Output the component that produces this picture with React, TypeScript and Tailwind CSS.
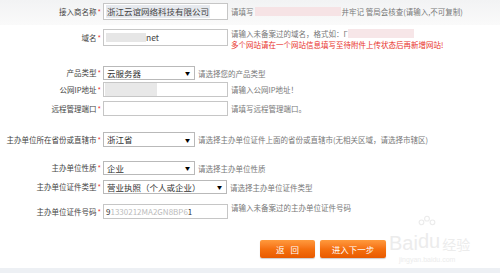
import React from "react";

const font = { fontFamily: '"Noto Sans CJK SC", "Noto Sans", sans-serif' };

function Label({ text }: { text: string }) {
    return (
        <div className="w-[103px] shrink-0 text-right pr-[2px] text-[7.5px] leading-none text-[#444]">
            {text}
            <span className="text-[#e33] ml-[1px]">*</span>
        </div>
    );
}

function Hint({ children, red }: { children: React.ReactNode; red?: boolean }) {
    return (
        <div className={`ml-[3px] text-[7.5px] leading-[11px] whitespace-nowrap ${red ? "text-[#e8322b]" : "text-[#777]"}`}>
            {children}
        </div>
    );
}

function Select({ value, w, h }: { value: string; w: string; h: string }) {
    return (
        <div className={`${w} ${h} shrink-0 border border-[#b9b9b9] bg-white flex items-center justify-between pl-[3px] pr-[4px] text-[8.5px] text-[#333]`}>
            <span>{value}</span>
            <span className="text-[5px] text-black">▼</span>
        </div>
    );
}

export default function App() {
    return (
        <div style={font} className="w-[500px] h-[273px] bg-white overflow-hidden flex flex-col relative">
            <div className="absolute top-0 left-0 w-full h-[25px] bg-gradient-to-b from-[#f2f3f4] to-[#fafafa]" />

            {/* 接入商名称 */}
            <div className="relative flex items-center h-[17px] mt-[3px]">
                <Label text="接入商名称" />
                <div className="w-[125px] h-[17px] shrink-0 border border-[#c6c6c6] bg-white flex items-center pl-[2px] text-[8.5px] text-[#444]">
                    <span className="bg-[#e6e9ee] px-[1px]">浙江云谊网络科技有限公司</span>
                </div>
                <Hint>
                    <span className="flex items-center">
                        请填写
                        <span className="inline-block w-[86px] h-[9px] mx-[1px] bg-[#f6e3e5]" />
                        井牢记 管局会核查(请输入,不可复制)
                    </span>
                </Hint>
            </div>

            {/* 域名 */}
            <div className="flex items-start h-[17px] mt-[9px]">
                <div className="h-[17px] flex items-center">
                    <Label text="域名" />
                </div>
                <div className="w-[125px] h-[17px] shrink-0 border border-[#c6c6c6] bg-white flex items-center pl-[2px] text-[8.5px] text-[#444]">
                    <span className="inline-block w-[40px] h-[9px] bg-[#e6e6e6]" />
                    <span>net</span>
                </div>
                <div className="ml-[3px] -mt-[1px]">
                    <div className="text-[7.5px] leading-[11px] text-[#777] whitespace-nowrap flex items-center">
                        请输入未备案过的域名，格式如：Г
                        <span className="inline-block w-[66px] h-[9px] bg-[#f7e6e8]" />
                    </div>
                    <div className="text-[7.5px] leading-[11px] text-[#e8322b] whitespace-nowrap">
                        多个网站请在一个网站信息填写至待附件上传状态后再新增网站!
                    </div>
                </div>
            </div>

            {/* 产品类型 */}
            <div className="flex items-center h-[14px] mt-[20px]">
                <Label text="产品类型" />
                <Select value="云服务器" w="w-[92px]" h="h-[14px]" />
                <Hint>请选择您的产品类型</Hint>
            </div>

            {/* 公网IP地址 */}
            <div className="flex items-center h-[15px] mt-[2px]">
                <Label text="公网IP地址" />
                <div className="w-[125px] h-[15px] shrink-0 border border-[#c6c6c6] bg-white flex items-center pl-[1px]">
                    <span className="inline-block w-[52px] h-[13px] bg-[#e8e8e8]" />
                </div>
                <Hint>请输入公网IP地址！</Hint>
            </div>

            {/* 远程管理端口 */}
            <div className="flex items-center h-[15px] mt-[4px]">
                <Label text="远程管理端口" />
                <div className="w-[125px] h-[15px] shrink-0 border border-[#c6c6c6] bg-white" />
                <Hint>请填写远程管理端口。</Hint>
            </div>

            {/* 省份 */}
            <div className="flex items-center h-[15px] mt-[16px]">
                <Label text="主办单位所在省份或直辖市" />
                <Select value="浙江省" w="w-[92px]" h="h-[15px]" />
                <Hint>请选择主办单位证件上面的省份或直辖市(无相关区域，请选择市辖区)</Hint>
            </div>

            {/* 性质 */}
            <div className="flex items-center h-[14px] mt-[14px]">
                <Label text="主办单位性质" />
                <Select value="企业" w="w-[92px]" h="h-[14px]" />
                <Hint>请选择主办单位性质</Hint>
            </div>

            {/* 证件类型 */}
            <div className="flex items-center h-[14px] mt-[5px]">
                <Label text="主办单位证件类型" />
                <Select value="营业执照（个人或企业）" w="w-[124px]" h="h-[14px]" />
                <Hint>请选择主办单位证件类型</Hint>
            </div>

            {/* 证件号码 */}
            <div className="flex items-start h-[15px] mt-[10px]">
                <div className="h-[15px] flex items-center">
                    <Label text="主办单位证件号码" />
                </div>
                <div className="w-[125px] h-[15px] shrink-0 border border-[#c6c6c6] bg-white flex items-center pl-[2px] text-[8px] text-[#bbb]">
                    <span className="text-[#333]">9</span>
                    <span>1330212MA2GN8BP6</span>
                    <span className="text-[#333]">1</span>
                </div>
                <div className="ml-[3px] -mt-[2px] text-[7.5px] leading-[11px] text-[#777] whitespace-nowrap">
                    请输入未备案过的主办单位证件号码
                </div>
            </div>

            {/* buttons */}
            <div className="relative flex items-center h-[18px] mt-[21px] pl-[260px] gap-[5px]">
                <button className="w-[55px] h-[18px] rounded-[2px] bg-gradient-to-b from-[#ff9a3c] via-[#f5700f] to-[#e85a00] text-white text-[8.5px] tracking-[6px] pl-[6px] shadow-[0_1px_1px_rgba(0,0,0,0.2)]">
                    返回
                </button>
                <button className="w-[66px] h-[18px] rounded-[2px] bg-gradient-to-b from-[#ff9a3c] via-[#f5700f] to-[#e85a00] text-white text-[8.5px] shadow-[0_1px_1px_rgba(0,0,0,0.2)]">
                    进入下一步
                </button>
            </div>

            {/* watermark */}
            <div className="absolute left-[389px] top-[229px] flex flex-col items-start pointer-events-none">
                <div className="flex items-end text-[#ececec]">
                    <span className="text-[20px] leading-none" style={{ fontFamily: '"Liberation Sans", sans-serif' }}>Bai</span>
                    <div className="relative">
                        <svg width="22" height="22" viewBox="0 0 24 24" className="absolute -top-[14px] left-[-2px]">
                            <circle cx="6" cy="8" r="2.6" fill="none" stroke="#ebebeb" strokeWidth="1.2" />
                            <circle cx="12" cy="4" r="2.6" fill="none" stroke="#ebebeb" strokeWidth="1.2" />
                            <circle cx="18" cy="8" r="2.6" fill="none" stroke="#ebebeb" strokeWidth="1.2" />
                        </svg>
                        <span className="text-[20px] leading-none" style={{ fontFamily: '"Liberation Sans", sans-serif' }}>du</span>
                    </div>
                    <span className="text-[14px] leading-none ml-[2px] mb-[2px]">经验</span>
                </div>
                <span className="text-[7px] text-[#ececec] ml-[10px] leading-none mt-[3px]" style={{ fontFamily: '"Liberation Sans", sans-serif' }}>
                    jingyan.baidu.com
                </span>
            </div>

            <div className="mt-auto h-[5px] w-full bg-[#edf0f4]" />
        </div>
    );
}
